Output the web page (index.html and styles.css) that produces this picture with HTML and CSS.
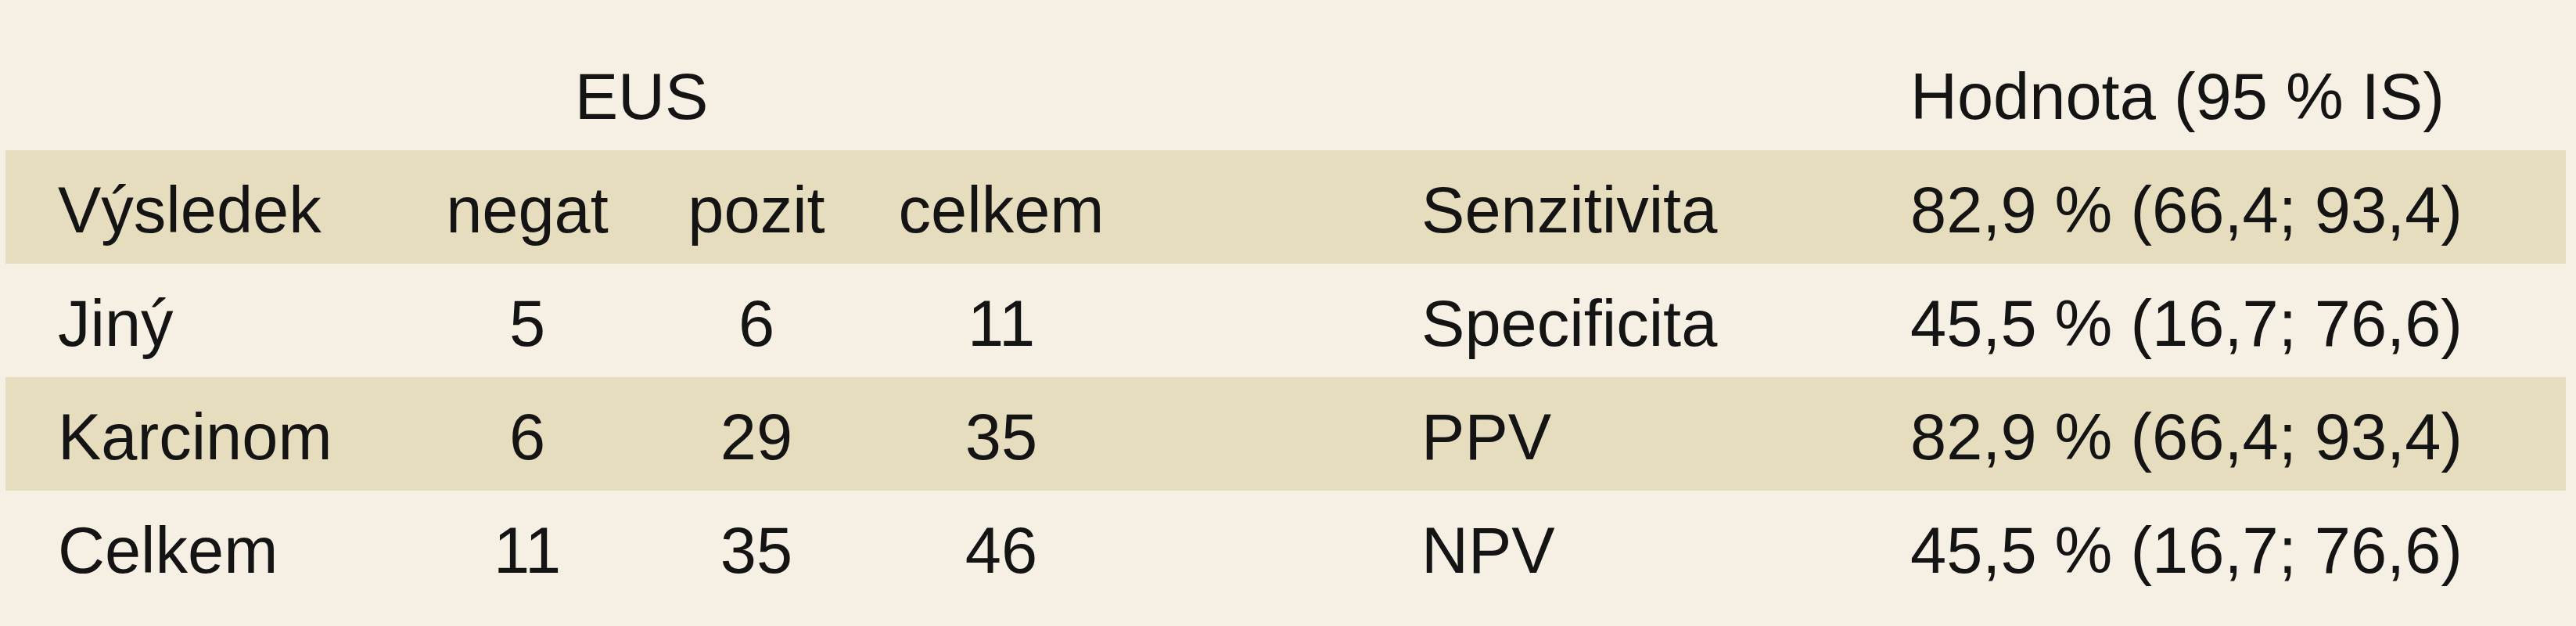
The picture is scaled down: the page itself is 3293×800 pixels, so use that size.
FILE: index.html
```html
<!DOCTYPE html>
<html lang="cs">
<head>
<meta charset="utf-8">
<title>EUS</title>
<link rel="stylesheet" href="styles.css">
</head>
<body>
<table class="stats">
  <colgroup>
    <col class="c-label">
    <col class="c-neg">
    <col class="c-poz">
    <col class="c-cel">
    <col class="c-metric">
    <col class="c-value">
  </colgroup>
  <thead>
    <tr class="head">
      <th></th>
      <th colspan="2" class="center">EUS</th>
      <th></th>
      <th></th>
      <th class="value">Hodnota (95 % IS)</th>
    </tr>
  </thead>
  <tbody>
    <tr class="band">
      <td class="label">Výsledek</td>
      <td class="center">negat</td>
      <td class="center">pozit</td>
      <td class="center">celkem</td>
      <td class="metric">Senzitivita</td>
      <td class="value">82,9 % (66,4; 93,4)</td>
    </tr>
    <tr>
      <td class="label">Jiný</td>
      <td class="center">5</td>
      <td class="center">6</td>
      <td class="center">11</td>
      <td class="metric">Specificita</td>
      <td class="value">45,5 % (16,7; 76,6)</td>
    </tr>
    <tr class="band">
      <td class="label">Karcinom</td>
      <td class="center">6</td>
      <td class="center">29</td>
      <td class="center">35</td>
      <td class="metric">PPV</td>
      <td class="value">82,9 % (66,4; 93,4)</td>
    </tr>
    <tr>
      <td class="label">Celkem</td>
      <td class="center">11</td>
      <td class="center">35</td>
      <td class="center">46</td>
      <td class="metric">NPV</td>
      <td class="value">45,5 % (16,7; 76,6)</td>
    </tr>
  </tbody>
</table>
</body>
</html>
```

FILE: styles.css
```css
html, body {
  margin: 0;
  padding: 0;
  background: #f5f0e3;
}

body {
  width: 3293px;
  height: 800px;
  overflow: hidden;
  padding-left: 7px;
  box-sizing: border-box;
  font-family: "Liberation Sans", Arial, sans-serif;
  font-size: 83px;
  color: #141414;
}

.stats {
  border-collapse: collapse;
  border-spacing: 0;
  table-layout: fixed;
  width: 3273px;
}

.c-label { width: 520px; }
.c-neg { width: 294px; }
.c-poz { width: 292px; }
.c-cel { width: 334px; }
.c-metric { width: 928px; }
.c-value { width: 905px; }

.stats th,
.stats td {
  font-weight: normal;
  line-height: 92px;
  white-space: nowrap;
  padding: 31px 0 22px 0;
  text-align: left;
}

.head th {
  padding-top: 78px;
  padding-bottom: 22px;
}

.band {
  background: #e6dcbe;
}

.label {
  padding-left: 67px !important;
}

.center {
  text-align: center !important;
}

.metric {
  padding-left: 370px !important;
}

.value {
  padding-left: 67px !important;
}
```
